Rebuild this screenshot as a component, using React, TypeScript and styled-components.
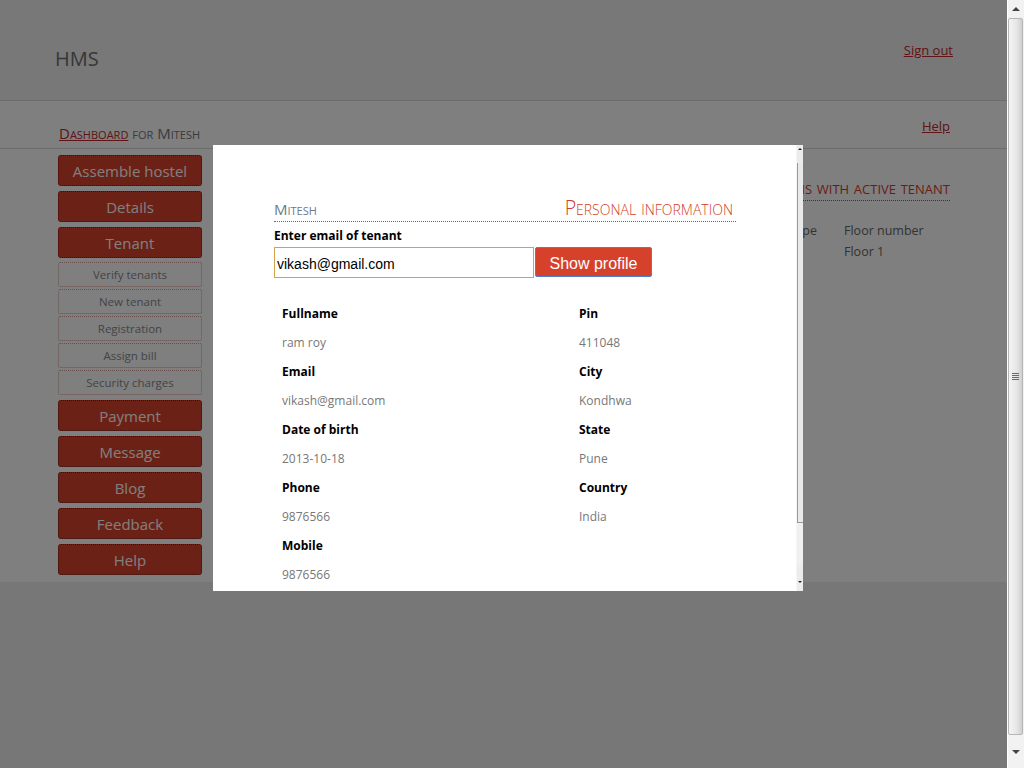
import React from "react";
import styled, { createGlobalStyle } from "styled-components";

const GlobalStyle = createGlobalStyle`
  html, body { margin: 0; padding: 0; overflow: hidden; background: #eeeeee; }
  body { font-family: "Open Sans", "Noto Sans", sans-serif; }
  * { box-sizing: border-box; }
`;

const RED = "#d9432c";

const Screen = styled.div`
  display: flex;
  width: 1024px;
  height: 768px;
`;

const Viewport = styled.div`
  position: relative;
  flex: 1;
  height: 100%;
  overflow: hidden;
`;

const Page = styled.div`
  display: flex;
  flex-direction: column;
  height: 100%;
  background: #eeeeee;
`;

const Header = styled.header`
  display: flex;
  justify-content: space-between;
  align-items: flex-start;
  height: 101px;
  padding: 0 54px 0 55px;
  background: #f0f0f0;
  border-bottom: 1px solid #d8d8d8;
`;

const Logo = styled.div`
  margin-top: 46px;
  font-size: 20px;
  line-height: 26px;
  color: #6e6e6e;
`;

const Link = styled.a<{ $size?: number }>`
  color: #c0282a;
  text-decoration: underline;
  font-size: ${(p) => p.$size ?? 13}px;
  cursor: pointer;
`;

const SignOut = styled(Link)`
  margin-top: 40px;
  line-height: 20px;
`;

const CrumbBar = styled.div`
  display: flex;
  justify-content: space-between;
  height: 48px;
  padding: 0 57px 0 59px;
  background: #fefefe;
  border-bottom: 1px solid #d8d8d8;
`;

const Crumb = styled.div`
  margin-top: 21px;
  font-size: 15px;
  line-height: 22px;
  font-variant: small-caps;
  color: #777;
`;

const CrumbLink = styled(Link)`
  font-size: 15px;
`;

const HelpLink = styled(Link)`
  margin-top: 15px;
  line-height: 20px;
`;

const Content = styled.main`
  display: flex;
  height: 433px;
  background: #ffffff;
  padding: 6px 57px 0 58px;
`;

const Sidebar = styled.nav`
  display: flex;
  flex-direction: column;
  gap: 5px;
  width: 144px;
`;

const NavButton = styled.div`
  height: 31px;
  display: flex;
  align-items: center;
  justify-content: center;
  background: ${RED};
  border: 1px dotted #7a1d10;
  border-radius: 3px;
  color: #ffffff;
  font-size: 15px;
`;

const SubList = styled.div`
  display: flex;
  flex-direction: column;
  gap: 2px;
  margin: -1px 0 0;
`;

const SubItem = styled.div`
  height: 25px;
  display: flex;
  align-items: center;
  justify-content: center;
  background: #ffffff;
  border: 1px dotted #d09a94;
  border-radius: 2px;
  color: #888;
  font-size: 11.5px;
`;

const Main = styled.section`
  flex: 1;
  display: flex;
  flex-direction: column;
  align-items: flex-end;
  padding-top: 21px;
`;

const SectionTitle = styled.h2`
  margin: 0;
  font-weight: 400;
  font-size: 18px;
  line-height: 22px;
  font-variant: small-caps;
  color: #d63a2a;
  border-bottom: 1px dotted ${RED};
  padding-bottom: 2px;
`;

const RoomTable = styled.div`
  margin-top: 19px;
  display: grid;
  grid-template-columns: 110px 90px 106px;
  grid-auto-rows: 21px;
  align-items: center;
  font-size: 12.5px;
  color: #666;
`;

const Footer = styled.footer`
  flex: 1;
  background: #eeeeee;
`;

const Overlay = styled.div`
  position: absolute;
  inset: 0;
  background: rgba(0, 0, 0, 0.5);
`;

const Modal = styled.div`
  position: absolute;
  left: 213px;
  top: 145px;
  width: 590px;
  height: 446px;
  display: flex;
  background: #ffffff;
  overflow: hidden;
`;

const ModalBody = styled.div`
  flex: 1;
  padding: 52px 60px 0 61px;
  overflow: hidden;
`;

const ModalHead = styled.div`
  display: flex;
  justify-content: space-between;
  align-items: flex-end;
  height: 25px;
  border-bottom: 1px dotted #c0482e;
  font-variant: small-caps;
`;

const HeadName = styled.span`
  font-size: 15px;
  line-height: 20px;
  color: #6b7a8f;
  margin-bottom: 2px;
`;

const HeadTitle = styled.span`
  font-size: 19.5px;
  font-weight: 300;
  line-height: 20px;
  color: #d23c28;
  margin: 0 3px 3px 0;
`;

const FieldLabel = styled.div`
  margin-top: 5px;
  font-size: 12px;
  font-weight: 700;
  line-height: 18px;
  color: #000;
`;

const SearchRow = styled.div`
  display: flex;
  align-items: flex-start;
  margin-top: 2px;
`;

const EmailInput = styled.input`
  width: 260px;
  height: 31px;
  padding: 2px 2px 0;
  border: 1px solid #d4a24c;
  outline: none;
  font-family: "Liberation Sans", Arial, sans-serif;
  font-size: 14px;
  color: #000;
`;

const ShowButton = styled.button`
  margin-left: 1px;
  width: 117px;
  height: 30px;
  padding: 3px 0 0;
  background: #d6412b;
  border: 1px solid #4f7fd0;
  border-radius: 2px;
  color: #fff;
  font-family: "Liberation Sans", Arial, sans-serif;
  font-size: 16px;
`;

const InfoGrid = styled.div`
  margin-top: 21px;
  display: grid;
  grid-template-columns: 297px 1fr;
  grid-auto-flow: column;
  grid-template-rows: repeat(10, 29px);
  align-items: center;
`;

const InfoLabel = styled.div`
  padding-left: 8px;
  font-size: 12px;
  font-weight: 700;
  color: #000;
`;

const InfoValue = styled.div`
  padding-left: 8px;
  font-size: 12px;
  color: #777;
`;

const MiniScroll = styled.div`
  width: 7px;
  display: flex;
  flex-direction: column;
  background: #ececec;
  border-left: 1px solid #f6f6f6;
`;

const MiniArrow = styled.div<{ $down?: boolean }>`
  height: ${(p) => (p.$down ? "26px" : "18px")};
  display: flex;
  justify-content: center;
  align-items: ${(p) => (p.$down ? "flex-end" : "flex-start")};
  padding: ${(p) => (p.$down ? "0 0 8px" : "3px 0 0")};
  &::after {
    content: "";
    border-left: 2px solid transparent;
    border-right: 2px solid transparent;
    ${(p) => (p.$down ? "border-top: 2px solid #222;" : "border-bottom: 2px solid #222;")}
  }
`;

const MiniThumb = styled.div`
  height: 360px;
  background: #e9e9e9;
  border-left: 1px solid #9a9a9a;
  border-bottom: 1px solid #9a9a9a;
`;

const MiniTrack = styled.div`
  flex: 1;
  background: #f0f0f0;
`;

const WinScroll = styled.div`
  width: 17px;
  height: 100%;
  display: flex;
  flex-direction: column;
  background: #f2f2f2;
  border-left: 1px solid #ffffff;
`;

const WinArrow = styled.div<{ $down?: boolean }>`
  height: ${(p) => (p.$down ? "33px" : "18px")};
  display: flex;
  justify-content: center;
  align-items: center;
  &::after {
    content: "";
    border-left: 4px solid transparent;
    border-right: 4px solid transparent;
    ${(p) => (p.$down ? "border-top: 4px solid #444;" : "border-bottom: 4px solid #444;")}
  }
`;

const WinThumb = styled.div`
  height: 717px;
  margin-right: 1px;
  display: flex;
  align-items: center;
  justify-content: center;
  background: linear-gradient(to right, #f4f4f4, #e6e6e6 60%, #cfcfcf);
  border: 1px solid #b5b5b5;
  border-radius: 2px;
`;

const Grip = styled.div`
  width: 7px;
  height: 7px;
  background: repeating-linear-gradient(to bottom, #6a6a6a 0 1px, transparent 1px 2px);
`;

const navTop = ["Assemble hostel", "Details", "Tenant"];
const subItems = ["Verify tenants", "New tenant", "Registration", "Assign bill", "Security charges"];
const navBottom = ["Payment", "Message", "Blog", "Feedback", "Help"];

const left = [
  ["Fullname", "ram roy"],
  ["Email", "vikash@gmail.com"],
  ["Date of birth", "2013-10-18"],
  ["Phone", "9876566"],
  ["Mobile", "9876566"],
];
const right = [
  ["Pin", "411048"],
  ["City", "Kondhwa"],
  ["State", "Pune"],
  ["Country", "India"],
];

export default function App() {
  return (
    <>
      <GlobalStyle />
      <Screen>
        <Viewport>
          <Page>
            <Header>
              <Logo>HMS</Logo>
              <SignOut>Sign out</SignOut>
            </Header>
            <CrumbBar>
              <Crumb>
                <CrumbLink>Dashboard</CrumbLink> for Mitesh
              </Crumb>
              <HelpLink>Help</HelpLink>
            </CrumbBar>
            <Content>
              <Sidebar>
                {navTop.map((n) => (
                  <NavButton key={n}>{n}</NavButton>
                ))}
                <SubList>
                  {subItems.map((s) => (
                    <SubItem key={s}>{s}</SubItem>
                  ))}
                </SubList>
                {navBottom.map((n) => (
                  <NavButton key={n}>{n}</NavButton>
                ))}
              </Sidebar>
              <Main>
                <SectionTitle>Rooms with active tenant</SectionTitle>
                <RoomTable>
                  <span>Room number</span>
                  <span>Room type</span>
                  <span>Floor number</span>
                  <span>101</span>
                  <span>Single</span>
                  <span>Floor 1</span>
                </RoomTable>
              </Main>
            </Content>
            <Footer />
          </Page>
          <Overlay />
          <Modal>
            <ModalBody>
              <ModalHead>
                <HeadName>Mitesh</HeadName>
                <HeadTitle>Personal information</HeadTitle>
              </ModalHead>
              <FieldLabel>Enter email of tenant</FieldLabel>
              <SearchRow>
                <EmailInput defaultValue="vikash@gmail.com" />
                <ShowButton>Show profile</ShowButton>
              </SearchRow>
              <InfoGrid>
                {left.map(([l, v]) => (
                  <React.Fragment key={l}>
                    <InfoLabel>{l}</InfoLabel>
                    <InfoValue>{v}</InfoValue>
                  </React.Fragment>
                ))}
                {right.map(([l, v]) => (
                  <React.Fragment key={l}>
                    <InfoLabel>{l}</InfoLabel>
                    <InfoValue>{v}</InfoValue>
                  </React.Fragment>
                ))}
              </InfoGrid>
            </ModalBody>
            <MiniScroll>
              <MiniArrow />
              <MiniThumb />
              <MiniTrack />
              <MiniArrow $down />
            </MiniScroll>
          </Modal>
        </Viewport>
        <WinScroll>
          <WinArrow />
          <WinThumb>
            <Grip />
          </WinThumb>
          <WinArrow $down />
        </WinScroll>
      </Screen>
    </>
  );
}
